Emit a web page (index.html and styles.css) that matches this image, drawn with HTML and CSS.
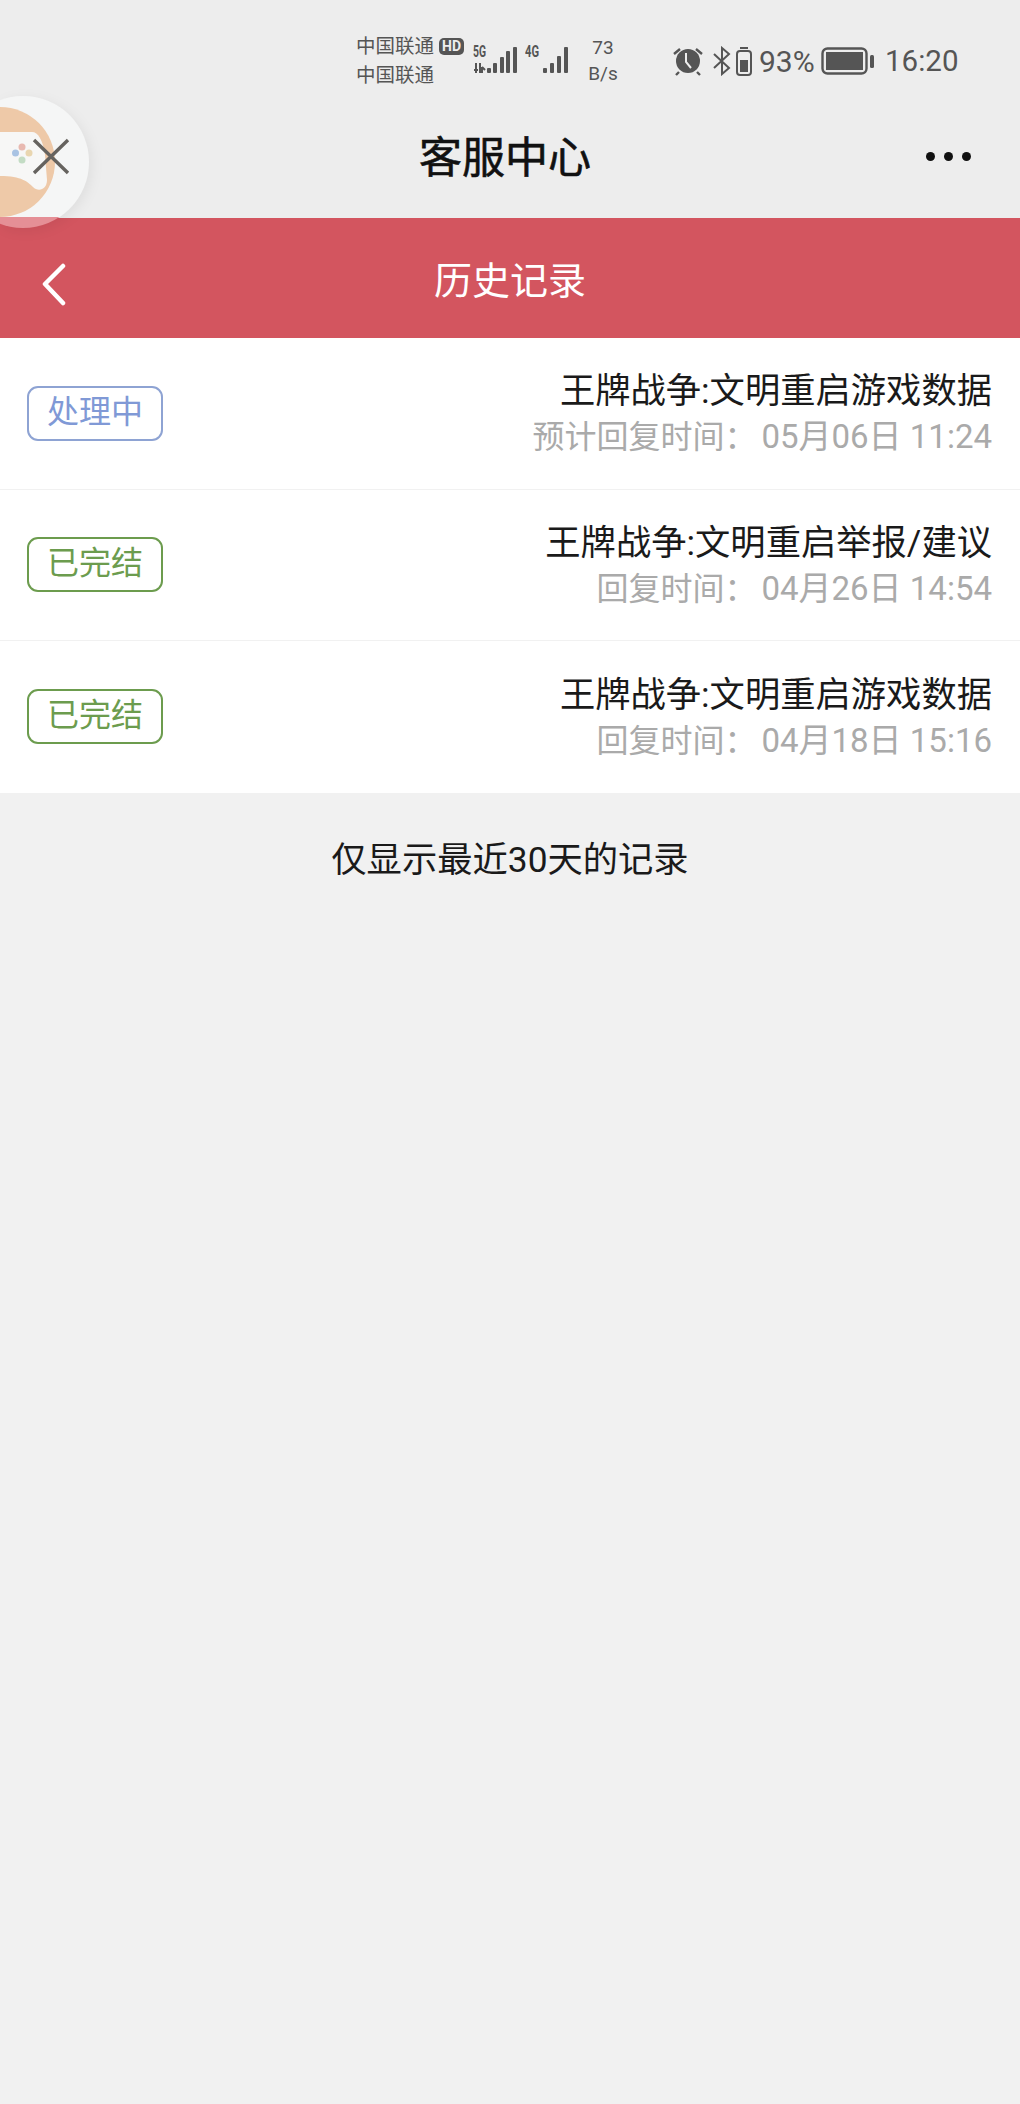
FILE: index.html
```html
<!doctype html>
<html lang="zh">
  <head>
    <meta charset="utf-8" />
    <title>客服中心</title>
    <link rel="stylesheet" href="styles.css">
  </head>
  <body>
    <div class="topbar">
      <div class="status">
        <div class="carriers">
          <div class="carrier">中国联通<span class="hd">HD</span></div>
          <div class="carrier">中国联通</div>
        </div>
        <svg class="signal" width="46" height="44" viewBox="0 -4 46 44">
          <text x="0" y="14" class="net" textLength="13" lengthAdjust="spacingAndGlyphs">5G</text>
          <path d="M3 20v10M7 20v10M1 27h4M9 24v6M9 24l3 3" class="arrows"/>
          <rect x="14" y="25" width="4" height="5" rx="1"/>
          <rect x="20" y="20" width="4" height="10" rx="1"/>
          <rect x="27" y="14" width="4" height="16" rx="1"/>
          <rect x="33" y="8" width="4" height="22" rx="1"/>
          <rect x="40" y="4" width="4" height="26" rx="1"/>
        </svg>
        <svg class="signal" width="46" height="44" viewBox="0 -4 46 44">
          <text x="0" y="14" class="net" textLength="14" lengthAdjust="spacingAndGlyphs">4G</text>
          <rect x="18" y="25" width="4" height="5" rx="1"/>
          <rect x="25" y="20" width="4" height="10" rx="1"/>
          <rect x="32" y="13" width="4" height="17" rx="1"/>
          <rect x="39" y="4" width="4" height="26" rx="1"/>
        </svg>
        <div class="speed">73<br>B/s</div>
        <svg class="alarm" width="32" height="30" viewBox="0 0 32 30">
          <circle cx="16" cy="15" r="12" fill="#555"/>
          <path d="M2 8l6-5M30 8l-6-5M7 26l-3 3M25 26l3 3" stroke="#555" stroke-width="2.4" fill="none"/>
          <path d="M14 7v9l5 6" stroke="#eee" stroke-width="2" fill="none"/>
        </svg>
        <svg class="bt" width="20" height="30" viewBox="0 0 20 30">
          <path d="M2 8l15 14-7 6V2l7 6L2 22" stroke="#555" stroke-width="2" fill="none"/>
        </svg>
        <svg class="minibatt" width="18" height="30" viewBox="0 0 18 30">
          <rect x="5" y="1" width="8" height="2" fill="#555"/>
          <rect x="2" y="5" width="14" height="24" rx="3" fill="none" stroke="#555" stroke-width="2"/>
          <rect x="5" y="14" width="8" height="12" fill="#555"/>
        </svg>
        <div class="percent">93%</div>
        <svg class="battery" width="54" height="28" viewBox="0 0 54 28">
          <rect x="1.5" y="1.5" width="44" height="25" rx="5" fill="none" stroke="#555" stroke-width="2.4"/>
          <rect x="5" y="5" width="37" height="18" fill="#555"/>
          <rect x="49" y="8" width="4" height="13" rx="1.5" fill="#555"/>
        </svg>
        <div class="clock">16:20</div>
      </div>
      <div class="navbar">
        <div class="navtitle">客服中心</div>
        <div class="dots"><i></i><i></i><i></i></div>
      </div>
    </div>

    <div class="redbar">
      <svg class="back" width="26" height="44" viewBox="0 0 26 44">
        <path d="M22 3L4 21l18 19" fill="none" stroke="#fff" stroke-width="4.5" stroke-linecap="round" stroke-linejoin="round"/>
      </svg>
      <div class="redtitle">历史记录</div>
    </div>

    <div class="list">
      <div class="row">
        <span class="tag doing">处理中</span>
        <div class="info">
          <div class="name">王牌战争:文明重启游戏数据</div>
          <div class="time">预计回复时间：<span class="when">05月06日 11:24</span></div>
        </div>
      </div>
      <div class="row">
        <span class="tag done">已完结</span>
        <div class="info">
          <div class="name">王牌战争:文明重启举报/建议</div>
          <div class="time">回复时间：<span class="when">04月26日 14:54</span></div>
        </div>
      </div>
      <div class="row">
        <span class="tag done">已完结</span>
        <div class="info">
          <div class="name">王牌战争:文明重启游戏数据</div>
          <div class="time">回复时间：<span class="when">04月18日 15:16</span></div>
        </div>
      </div>
    </div>

    <div class="note">仅显示最近30天的记录</div>

    <!-- floating game button over the header -->
    <svg class="floater" width="92" height="136" viewBox="0 0 92 136">
      <defs>
        <clipPath id="above"><rect x="0" y="0" width="92" height="122"/></clipPath>
        <clipPath id="below"><rect x="0" y="122" width="92" height="14"/></clipPath>
      </defs>
      <circle cx="23" cy="67" r="66" fill="#f5f6f6" clip-path="url(#above)"/>
      <circle cx="23" cy="67" r="66" fill="#e58f96" clip-path="url(#below)"/>
      <circle cx="0" cy="67" r="55" fill="#eec9a8"/>
      <path d="M0 37H32C38 37 43 45 45 60L47 85C47 95 38 97 33 92C28 87 22 81 0 81Z" fill="#f7f7f6"/>
      <circle cx="22" cy="52" r="3.5" fill="#e8b9b0"/>
      <circle cx="15.5" cy="58" r="3.5" fill="#a9c3e3"/>
      <circle cx="29" cy="58" r="3.5" fill="#e9d6b0"/>
      <circle cx="22" cy="65" r="3.5" fill="#c3dcc4"/>
      <path d="M34 45l34 33M68 45L34 78" stroke="#66635f" stroke-width="3.4" fill="none"/>
    </svg>
  </body>
</html>
```

FILE: styles.css
```css
body {
  margin: 0;
  position: relative;
  height: 2104px;
  overflow: hidden;
  background: #f1f1f1;
  font-family: Roboto, "Noto Sans CJK SC", sans-serif;
}

.topbar {
  height: 218px;
  background: #ededed;
}

.status {
  height: 104px;
  padding-left: 356px;
  display: flex;
  align-items: center;
  color: #555;
  box-sizing: border-box;
  padding-top: 18px;
}

.carriers {
  width: 117px;
  font-size: 19.5px;
  line-height: 29px;
}

.carrier {
  display: flex;
  align-items: center;
}

.hd {
  margin-left: 5px;
  padding: 0 3px;
  height: 17px;
  line-height: 17px;
  background: #555;
  color: #eee;
  border-radius: 5px;
  font-size: 14px;
  font-weight: 700;
}

.signal {
  fill: #555;
  margin-right: 6px;
}

.net {
  font-size: 17px;
  font-weight: 700;
}

.arrows {
  stroke: #555;
  stroke-width: 2;
  fill: none;
}

.speed {
  width: 64px;
  margin-right: 37px;
  font-size: 19px;
  line-height: 26px;
  text-align: center;
  margin-left: -6px;
}

.alarm {
  margin-right: 8px;
}

.bt {
  margin-right: 3px;
}

.minibatt {
  margin-right: 6px;
}

.percent {
  font-size: 30px;
  width: 62px;
}

.battery {
  margin-right: 10px;
}

.clock {
  font-size: 29.5px;
}

.navbar {
  height: 114px;
  position: relative;
  display: flex;
  justify-content: center;
  align-items: center;
  padding-bottom: 14px;
  box-sizing: border-box;
}

.navtitle {
  font-size: 43px;
  color: #111;
  margin-right: 10px;
  -webkit-text-stroke: 0.6px #111;
}

.dots {
  position: absolute;
  right: 49px;
  top: 48px;
  display: flex;
  gap: 9px;
}

.dots i {
  width: 9px;
  height: 9px;
  border-radius: 50%;
  background: #111;
}

.redbar {
  height: 120px;
  background: #d3555f;
  display: flex;
  justify-content: center;
  align-items: center;
  position: relative;
}

.back {
  position: absolute;
  left: 41px;
  top: 45px;
}

.redtitle {
  font-size: 38px;
  color: #fff;
  margin-bottom: 2px;
}

.list {
  background: #fff;
}

.row {
  height: 151.5px;
  padding: 0 27px;
  display: flex;
  justify-content: space-between;
  align-items: center;
  border-bottom: 1px solid #f1f1f1;
  box-sizing: border-box;
}

.row:last-child {
  border-bottom: none;
}

.tag {
  width: 136px;
  height: 55px;
  box-sizing: border-box;
  border: 2px solid;
  border-radius: 11px;
  font-size: 32px;
  line-height: 49px;
  text-align: center;
}

.doing {
  color: #8099d6;
  border-color: #8ea3d3;
}

.done {
  color: #6c9c4e;
  border-color: #6c9c4e;
}

.info {
  text-align: right;
  padding-top: 2px;
  margin-right: 1px;
}

.name {
  font-size: 35.3px;
  line-height: 46px;
  color: #1a1a1a;
}

.time {
  font-size: 32px;
  line-height: 45px;
  color: #aaa;
}

.when {
  font-size: 33px;
  margin-left: 5px;
}

.note {
  margin-top: 44px;
  font-size: 35.3px;
  line-height: 46px;
  text-align: center;
  color: #1a1a1a;
}

.floater {
  position: absolute;
  left: 0;
  top: 95px;
  filter: drop-shadow(3px 3px 6px rgba(0, 0, 0, 0.06));
}
```
